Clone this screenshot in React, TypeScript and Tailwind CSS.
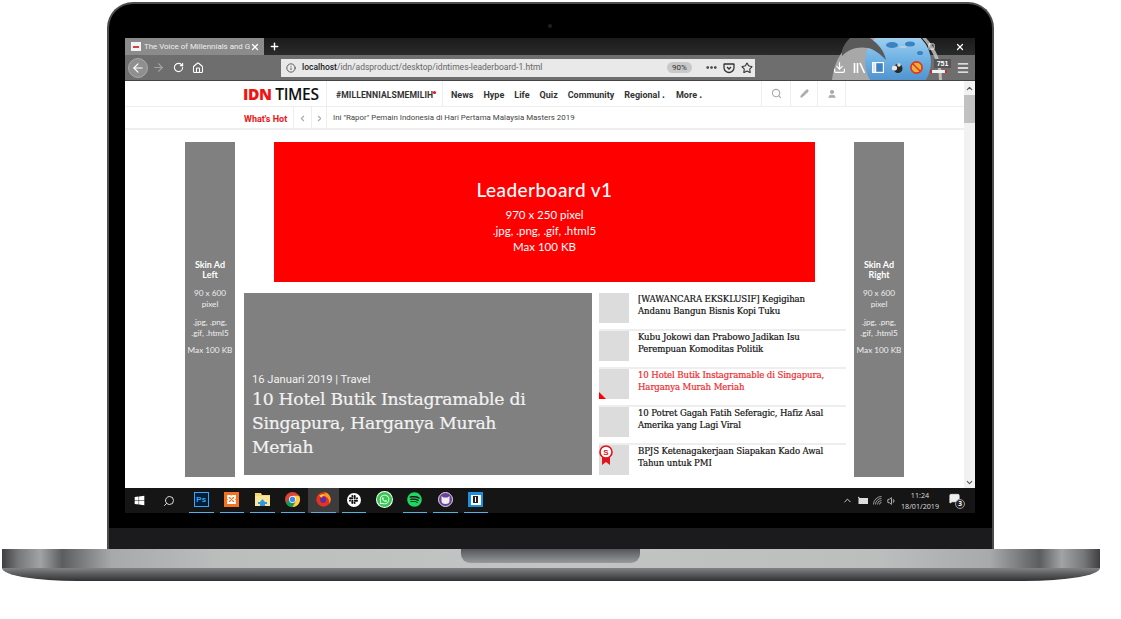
import type { ReactNode } from "react";
import {
  ArrowLeft,
  ArrowRight,
  ChevronDown,
  ChevronLeft,
  ChevronRight,
  ChevronUp,
  Download,
  Home,
  Info,
  Menu,
  MessageSquare,
  Minus,
  MoreHorizontal,
  Pencil,
  Plus,
  RotateCw,
  Search,
  Square,
  Star,
  User,
  Volume1,
  X,
} from "lucide-react";
import { FaSpotify, FaWhatsapp, FaWindows } from "react-icons/fa";
import { SiSlack } from "react-icons/si";

const navItems = ["News", "Hype", "Life", "Quiz", "Community"];

const stories = [
  { title: ["[WAWANCARA EKSKLUSIF] Kegigihan", "Andanu Bangun Bisnis Kopi Tuku"] },
  { title: ["Kubu Jokowi dan Prabowo Jadikan Isu", "Perempuan Komoditas Politik"] },
  { title: ["10 Hotel Butik Instagramable di Singapura,", "Harganya Murah Meriah"], active: true },
  { title: ["10 Potret Gagah Fatih Seferagic, Hafiz Asal", "Amerika yang Lagi Viral"] },
  { title: ["BPJS Ketenagakerjaan Siapakan Kado Awal", "Tahun untuk PMI"], badge: true },
];

function ChromeIcons() {
  return (
    <div className="flex h-[25px] items-center bg-[#6e6e6e]">
      <div className="ml-[3px] flex h-[20px] w-[20px] items-center justify-center rounded-full border border-[#a9a9a9] bg-[#8f8f8f]">
        <ArrowLeft size={14} color="#fff" strokeWidth={2} />
      </div>
      <ArrowRight size={13} color="#a5a5a5" strokeWidth={2} className="ml-[4px]" />
      <RotateCw size={11} color="#fff" strokeWidth={2.4} className="ml-[8px]" />
      <Home size={12} color="#fff" strokeWidth={2.2} className="ml-[8px]" />
      <div className="ml-[77px] flex h-[18px] w-[474px] items-center bg-[#e9e9e9] font-['Roboto',sans-serif] text-[8.5px]">
        <Info size={10} color="#444" className="ml-[5px]" />
        <span className="ml-[6px] font-medium text-[#222]">localhost</span>
        <span className="text-[#666]">/idn/adsproduct/desktop/idntimes-leaderboard-1.html</span>
        <span className="ml-auto flex h-[11px] w-[25px] items-center justify-center rounded-full bg-[#c9c9c9] text-[8px] text-[#333]">90%</span>
        <MoreHorizontal size={13} color="#333" strokeWidth={3} className="ml-[13px]" />
        <svg width="12" height="12" viewBox="0 0 24 24" className="ml-[5px]" fill="none" stroke="#333" strokeWidth="2.6">
          <path d="M3 4h18a1 1 0 0 1 1 1v6a10 10 0 0 1-20 0V5a1 1 0 0 1 1-1z" />
          <path d="M8 10l4 4 4-4" />
        </svg>
        <Star size={12} color="#333" strokeWidth={2.2} className="ml-[6px] mr-[2px]" />
      </div>
      <div className="relative z-10 ml-[78px] flex items-center text-white">
        <Download size={13} color="#fff" strokeWidth={2.2} />
        <svg width="13" height="12" viewBox="0 0 13 12" className="ml-[7px]" stroke="#fff" strokeWidth="1.6" fill="none">
          <path d="M1.5 1v10M4.5 1v10M7 1l4.5 10" />
        </svg>
        <svg width="12" height="11" viewBox="0 0 12 11" className="ml-[6px]" stroke="#fff" strokeWidth="1.2" fill="#3f83c4">
          <rect x="0.6" y="0.6" width="10.8" height="9.8" />
          <rect x="0.6" y="0.6" width="3" height="9.8" fill="#cfe3f3" />
        </svg>
        <svg width="12" height="12" viewBox="0 0 12 12" className="ml-[7px]">
          <circle cx="7" cy="6.5" r="4.5" fill="#2a2a2a" />
          <circle cx="3.5" cy="6" r="2.6" fill="#e8e8e8" />
          <circle cx="8" cy="3" r="1.8" fill="#ddd" />
        </svg>
        <svg width="13" height="13" viewBox="0 0 13 13" className="ml-[7px]">
          <circle cx="6.5" cy="6.5" r="5.6" fill="#e8b23a" stroke="#e2341d" strokeWidth="1.6" />
          <path d="M2.5 2.5l8 8" stroke="#e2341d" strokeWidth="1.6" />
        </svg>
        <div className="relative ml-[7px] h-[17px] w-[21px]">
          <div className="absolute left-0 top-[11px] h-[3px] w-[17px] border-x-2 border-[#e2231a] bg-[#f2f2f2]" />
          <div className="absolute right-0 top-0 h-[9px] w-[17px] bg-[#555] text-center font-['Liberation_Sans',sans-serif] text-[7px] font-bold leading-[9px] text-white">751</div>
        </div>
        <Menu size={14} color="#fff" strokeWidth={2.2} className="ml-[5px]" />
      </div>
    </div>
  );
}

function PersonaGlobe() {
  return (
    <svg width="116" height="42" viewBox="0 0 116 42" className="absolute left-[705px] top-0">
      <defs>
        <linearGradient id="globe" x1="0" y1="0" x2="0" y2="1">
          <stop offset="0" stopColor="#b5dcf5" />
          <stop offset="0.45" stopColor="#6fb2e4" />
          <stop offset="1" stopColor="#3c7fc0" />
        </linearGradient>
      </defs>
      <path d="M2 42C4 24 12 8 30 0h20v42z" fill="#a8a8a8" />
      <circle cx="68" cy="24" r="33" fill="url(#globe)" />
      <ellipse cx="62" cy="7" rx="6" ry="3" fill="#3b82c0" />
      <ellipse cx="80" cy="6" rx="5" ry="2.500" fill="#3b82c0" />
      <ellipse cx="90" cy="15" rx="3" ry="2" fill="#3b82c0" />
      <path d="M20 0c-6 6-9 12-8 18 6-7 16-10 26-8 6 1 12 6 18 12-2-10-8-16-16-22z" fill="#5a5a5a" />
      <path d="M96 0c10 10 16 24 16 42h-3c0-16-6-30-17-42z" fill="#d6d6d6" opacity="0.75" />
    </svg>
  );
}

function BrowserChrome() {
  return (
    <div className="relative">
      <PersonaGlobe />
      <div className="flex h-[17px] items-center bg-[linear-gradient(#1b1b1b,#2a2a2a)]">
        <div className="flex h-[17px] w-[139px] items-center bg-[#8b8b8b] pl-[6px] text-white">
          <div className="flex h-[9px] w-[10px] items-center justify-center bg-[#f3f3f3]">
            <div className="h-[2px] w-[6px] bg-[#c44]" />
          </div>
          <span className="ml-[3px] w-[106px] whitespace-nowrap font-['Roboto',sans-serif] text-[7.9px] leading-[17px] text-[#eee]">The Voice of Millennials and G</span>
          <X size={10} color="#fff" strokeWidth={3} />
        </div>
        <Plus size={11} color="#fff" strokeWidth={3} className="ml-[5px]" />
        <div className="relative z-10 ml-auto flex items-center">
          <Minus size={10} color="#ddd" strokeWidth={2.5} />
          <Square size={7} color="#fff" strokeWidth={3} className="ml-[20px]" />
          <X size={10} color="#fff" strokeWidth={3} className="ml-[20px] mr-[10px]" />
        </div>
      </div>
      <ChromeIcons />
      <div className="h-px bg-[#444]" />
    </div>
  );
}

function SiteHeader() {
  return (
    <div className="font-['Roboto',sans-serif]">
      <div className="flex h-[26px] items-center border-b border-[#eee] pl-[118px] pr-[118px]">
        <div className="w-[83px] whitespace-nowrap font-['Open_Sans',sans-serif] text-[15.6px] leading-[26px] tracking-[-0.4px] text-[#111]">
          <span className="font-extrabold text-[#f01414]">IDN</span> <span className="font-semibold">TIMES</span>
        </div>
        <div className="flex h-[26px] w-[117px] items-center border-x border-[#eee] pl-[9px] pt-[4px] text-[8.6px] font-bold tracking-[0.1px] text-[#333]">
          #MILLENNIALSMEMILIH
          <span className="mb-[6px] h-[3px] w-[3px] rounded-full bg-[#f00]" />
        </div>
        <div className="ml-[8px] mt-[4px] flex gap-[10px] text-[9px] font-bold text-[#333]">
          {navItems.map((item) => (
            <span key={item}>{item}</span>
          ))}
          <span>Regional <span className="text-[10px] leading-none">.</span></span>
          <span className="ml-[1px]">More <span className="text-[10px] leading-none">.</span></span>
        </div>
        <div className="ml-auto flex h-[26px] text-[#aaa]">
          <div className="flex w-[29px] items-center justify-center border-l border-[#eee]">
            <Search size={11} strokeWidth={2.4} />
          </div>
          <div className="flex w-[27px] items-center justify-center border-l border-[#eee]">
            <Pencil size={9} fill="#aaa" />
          </div>
          <div className="flex w-[29px] items-center justify-center border-x border-[#eee]">
            <User size={10} fill="#aaa" />
          </div>
        </div>
      </div>
      <div className="flex h-[23px] items-center border-b-2 border-[#eee] pl-[119px]">
        <span className="mt-[5px] w-[49px] text-[9px] font-bold text-[#f01414]">What's Hot</span>
        <div className="flex h-[21px] w-[18px] items-center justify-center border-l border-[#eee] pt-[2px]">
          <ChevronLeft size={9} color="#aaa" strokeWidth={3} />
        </div>
        <div className="flex h-[21px] w-[16px] items-center justify-center border-x border-[#eee] pt-[2px]">
          <ChevronRight size={9} color="#aaa" strokeWidth={3} />
        </div>
        <span className="ml-[6px] text-[7.9px] text-[#444]">Ini "Rapor" Pemain Indonesia di Hari Pertama Malaysia Masters 2019</span>
      </div>
    </div>
  );
}

function SkinAd({ side }: { side: string }) {
  return (
    <div className="flex h-[335px] w-[50px] flex-col items-center justify-center bg-[#808080] pb-[3px] text-center font-['Lato',sans-serif] text-[8.2px] text-[#eee]">
      <p className="text-[9px] font-bold leading-[10px] text-white">
        Skin Ad
        <br />
        {side}
      </p>
      <p className="mt-[8px] leading-[11px]">
        90 x 600
        <br />
        pixel
      </p>
      <p className="mt-[7px] leading-[11px]">
        .jpg, .png,
        <br />
        .gif, .html5
      </p>
      <p className="mt-[6px] whitespace-nowrap leading-[11px]">Max 100 KB</p>
    </div>
  );
}

function StoryRow({ title, active, badge }: { title: string[]; active?: boolean; badge?: boolean }) {
  return (
    <div className="flex h-[38px] border-b-2 border-[#eee] last:border-b-0">
      <div className="relative h-[30px] w-[30px] shrink-0 bg-[#dcdcdc]">
        {active && <div className="absolute bottom-0 left-0 h-0 w-0 border-b-[7px] border-r-[7px] border-b-[#f00] border-r-transparent" />}
        {badge && (
          <svg width="14" height="20" viewBox="0 0 14 20" className="absolute left-0 top-0">
            <path d="M3 10v10l4-3 4 3V10z" fill="#e0141c" />
            <circle cx="7" cy="7" r="6" fill="#fff" stroke="#e0141c" strokeWidth="1.6" />
            <text x="7" y="10" textAnchor="middle" fontSize="8" fontWeight="700" fill="#e0141c" fontFamily="Liberation Sans, sans-serif">S</text>
          </svg>
        )}
      </div>
      <div className={`ml-[9px] whitespace-nowrap font-['DejaVu_Serif',serif] text-[8.6px] leading-[12px] tracking-[-0.12px] [-webkit-text-stroke:0.2px_currentColor] ${active ? "text-[#f0282d]" : "text-[#111]"}`}>
        {title.map((line) => (
          <p key={line}>{line}</p>
        ))}
      </div>
    </div>
  );
}

function PageContent() {
  return (
    <div className="flex pl-[60px] pt-[12px]">
      <SkinAd side="Left" />
      <div className="w-[619px]">
        <div className="ml-[39px] flex h-[140px] w-[541px] flex-col items-center bg-[#f00] pt-[37px] font-['Lato',sans-serif] text-white">
          <p className="text-[19px] font-medium leading-[22px] tracking-[0.45px]">Leaderboard v1</p>
          <p className="mt-[6px] text-center text-[11.5px] leading-[16px]">
            970 x 250 pixel
            <br />
            .jpg, .png, .gif, .html5
            <br />
            Max 100 KB
          </p>
        </div>
        <div className="ml-[9px] mt-[11px] flex">
          <div className="flex h-[182px] w-[348px] flex-col justify-end bg-[#808080] pb-[16px] pl-[8px] text-[#f2f2f2]">
            <p className="font-['Roboto',sans-serif] text-[11.2px] leading-[14px]">16 Januari 2019 | Travel</p>
            <p className="font-['DejaVu_Serif',serif] text-[17.2px] leading-[24px] tracking-[-0.25px] [-webkit-text-stroke:0.2px_currentColor]">
              10 Hotel Butik Instagramable di
              <br />
              Singapura, Harganya Murah
              <br />
              Meriah
            </p>
          </div>
          <div className="ml-[7px] w-[247px]">
            {stories.map((story) => (
              <StoryRow key={story.title[0]} {...story} />
            ))}
          </div>
        </div>
      </div>
      <SkinAd side="Right" />
    </div>
  );
}

function Scrollbar() {
  return (
    <div className="flex w-[11px] shrink-0 flex-col items-center bg-[#f1f1f1]">
      <ChevronUp size={9} color="#555" strokeWidth={3} className="mt-[3px]" />
      <div className="mt-[2px] h-[28px] w-full bg-[#c1c1c1]" />
      <ChevronDown size={9} color="#555" strokeWidth={3} className="mb-[1px] mt-auto" />
    </div>
  );
}

function TaskIcon({ children, on = true, active }: { children: ReactNode; on?: boolean; active?: boolean }) {
  return (
    <div className={`relative flex h-[25px] w-[30.5px] shrink-0 items-center justify-center ${active ? "bg-[#3c3c3c]" : ""}`}>
      <div className="mb-[2px] flex h-[16px] w-[16px] items-center justify-center">{children}</div>
      {on && <div className="absolute bottom-0 left-[3px] right-[3px] h-[1px] bg-[#4fb3e8]" />}
    </div>
  );
}

function Taskbar() {
  return (
    <div className="flex h-[25px] items-center bg-[#151515] text-white">
      <FaWindows size={11} color="#fff" className="ml-[9px]" />
      <Search size={12} color="#ddd" className="ml-[18px] -scale-x-100" />
      <div className="ml-[11px] flex">
        <TaskIcon>
          <div className="flex h-[15px] w-[15px] items-center justify-center border border-[#31a8ff] bg-[#001e36] font-['Liberation_Sans',sans-serif] text-[8px] font-bold text-[#31a8ff]">Ps</div>
        </TaskIcon>
        <TaskIcon>
          <div className="flex h-[15px] w-[15px] items-center justify-center bg-[#f4711f]">
            <svg width="11" height="11" viewBox="0 0 11 11" fill="none" stroke="#fff" strokeWidth="1.8">
              <path d="M2 2h2.5L5.5 3.5 6.5 2H9v2.5L7.5 5.5 9 6.5V9H6.5L5.5 7.5 4.500 9H2V6.500L3.500 5.500 2 4.500z" />
            </svg>
          </div>
        </TaskIcon>
        <TaskIcon>
          <svg width="15" height="13" viewBox="0 0 15 13">
            <path d="M0 0h6l1 2h8v11H0z" fill="#f7d774" />
            <path d="M0 3h15v10H0z" fill="#fbe59a" />
            <path d="M5 9l2.500-3L10 9v4H5z" fill="#2f9ade" />
            <rect x="3" y="9" width="9" height="2" fill="#2f9ade" />
          </svg>
        </TaskIcon>
        <TaskIcon>
          <svg width="15" height="15" viewBox="0 0 24 24">
            <circle cx="12" cy="12" r="12" fill="#db4437" />
            <path d="M12 24a12 12 0 0 1-10.400-6L7 9l5 9 5.500-1z" fill="#0f9d58" />
            <path d="M12 6h10.400A12 12 0 0 1 12 24l5.200-9z" fill="#ffcd40" />
            <circle cx="12" cy="12" r="5.500" fill="#fff" />
            <circle cx="12" cy="12" r="4.300" fill="#4285f4" />
          </svg>
        </TaskIcon>
        <TaskIcon active>
          <svg width="15" height="15" viewBox="0 0 24 24">
            <circle cx="12" cy="12" r="11.500" fill="#e8321f" />
            <path d="M12 0.500a11.500 11.500 0 0 1 9 18.500c1-5-1-10-6-12 1-2 0-5-3-6.500z" fill="#ff9a1f" />
            <circle cx="11.500" cy="12.500" r="5" fill="#5b2fa8" />
            <path d="M5 6c4-3 9-3 12 0-3-1-7 0-8 3z" fill="#ffcb2e" />
          </svg>
        </TaskIcon>
        <TaskIcon on>
          <div className="flex h-[14px] w-[14px] items-center justify-center rounded-full bg-white">
            <SiSlack size={9} color="#111" />
          </div>
        </TaskIcon>
        <TaskIcon on={false}>
          <div className="flex h-[15px] w-[15px] items-center justify-center rounded-full bg-[#33c94f] ring-1 ring-white">
            <FaWhatsapp size={11} color="#fff" />
          </div>
        </TaskIcon>
        <TaskIcon>
          <FaSpotify size={15} color="#1ed760" />
        </TaskIcon>
        <TaskIcon>
          <div className="flex h-[15px] w-[15px] items-center justify-center rounded-full border border-[#ddd] bg-[#6f3fa0]">
            <svg width="9" height="8" viewBox="0 0 9 8" fill="#eee">
              <path d="M0.500 0l2 1.500h4l2-1.500v5q0 3-4 3t-4-3z" />
            </svg>
          </div>
        </TaskIcon>
        <TaskIcon>
          <div className="flex h-[15px] w-[15px] items-center justify-center bg-[#1d8fe0]">
            <div className="flex h-[10px] w-[10px] items-center justify-center bg-white">
              <div className="h-[7px] w-[5px] border-y border-x-2 border-[#222]" />
            </div>
          </div>
        </TaskIcon>
      </div>
      <div className="ml-auto flex items-center text-[#ddd]">
        <ChevronUp size={11} strokeWidth={2} />
        <svg width="11" height="9" viewBox="0 0 11 9" className="ml-[4px]" fill="none" stroke="#ddd">
          <rect x="2" y="2.500" width="8.500" height="5" fill="#ddd" />
          <path d="M1 1l2 1.500" />
        </svg>
        <svg width="9" height="9" viewBox="0 0 9 9" className="ml-[5px]" fill="none" stroke="#999">
          <path d="M0.500 8.500a8 8 0 0 1 8-8M2.500 8.500a6 6 0 0 1 6-6M4.500 8.500a4 4 0 0 1 4-4M6.500 8.500a2 2 0 0 1 2-2" />
        </svg>
        <Volume1 size={10} className="ml-[5px]" />
        <div className="ml-[3px] w-[40px] text-center font-['Open_Sans',sans-serif] text-[7.2px] leading-[11px] text-[#ddd]">
          11:24
          <br />
          18/01/2019
        </div>
        <div className="relative ml-[9px] mr-[10px] h-[16px] w-[16px]">
          <MessageSquare size={11} color="#eee" fill="#eee" className="absolute left-0 top-0" />
          <span className="absolute bottom-0 right-0 flex h-[10px] w-[10px] items-center justify-center rounded-full border border-[#999] bg-[#222] font-['Open_Sans',sans-serif] text-[6.5px] font-bold text-white">3</span>
        </div>
      </div>
    </div>
  );
}

function LaptopBase() {
  return (
    <div className="relative ml-[2px] h-[32px] w-[1098px] overflow-hidden rounded-bl-[75px_13px] rounded-br-[75px_13px]">
      <div className="h-[19px] bg-[linear-gradient(90deg,#3f3f41_0%,#77787a_1.5%,#a2a3a5_3.5%,#5c5d5f_5.5%,#a7a9aa_10%,#bcbebe_20%,#c3c5c5_50%,#bcbebe_80%,#a7a9aa_90%,#5c5d5f_94.5%,#a2a3a5_96.5%,#77787a_98.5%,#3f3f41_100%)]" />
      <div className="h-[13px] bg-[linear-gradient(#818284,#303133)]" />
      <div className="absolute left-[459px] top-0 h-[14px] w-[179px] rounded-b-[9px] bg-[linear-gradient(#55565a,#97999a)]" />
    </div>
  );
}

export default function App() {
  return (
    <div className="flex h-[619px] w-[1121px] flex-col overflow-hidden bg-white pt-[2px]">
      <div className="relative ml-[107px] flex h-[547px] w-[887px] flex-col rounded-t-[26px] border-x-2 border-t-2 border-[#4d4d4d] bg-black">
        <div className="absolute left-[439px] top-[20px] h-[4px] w-[4px] rounded-full bg-[#1d2026]" />
        <div className="ml-[16px] mt-[34px] w-[850px]">
          <BrowserChrome />
          <div className="flex h-[407px] overflow-hidden bg-white">
            <div className="w-[839px] shrink-0">
              <SiteHeader />
              <PageContent />
            </div>
            <Scrollbar />
          </div>
          <Taskbar />
        </div>
        <div className="mt-[15px] h-[21px] bg-[#1b1b1d]" />
      </div>
      <LaptopBase />
    </div>
  );
}
